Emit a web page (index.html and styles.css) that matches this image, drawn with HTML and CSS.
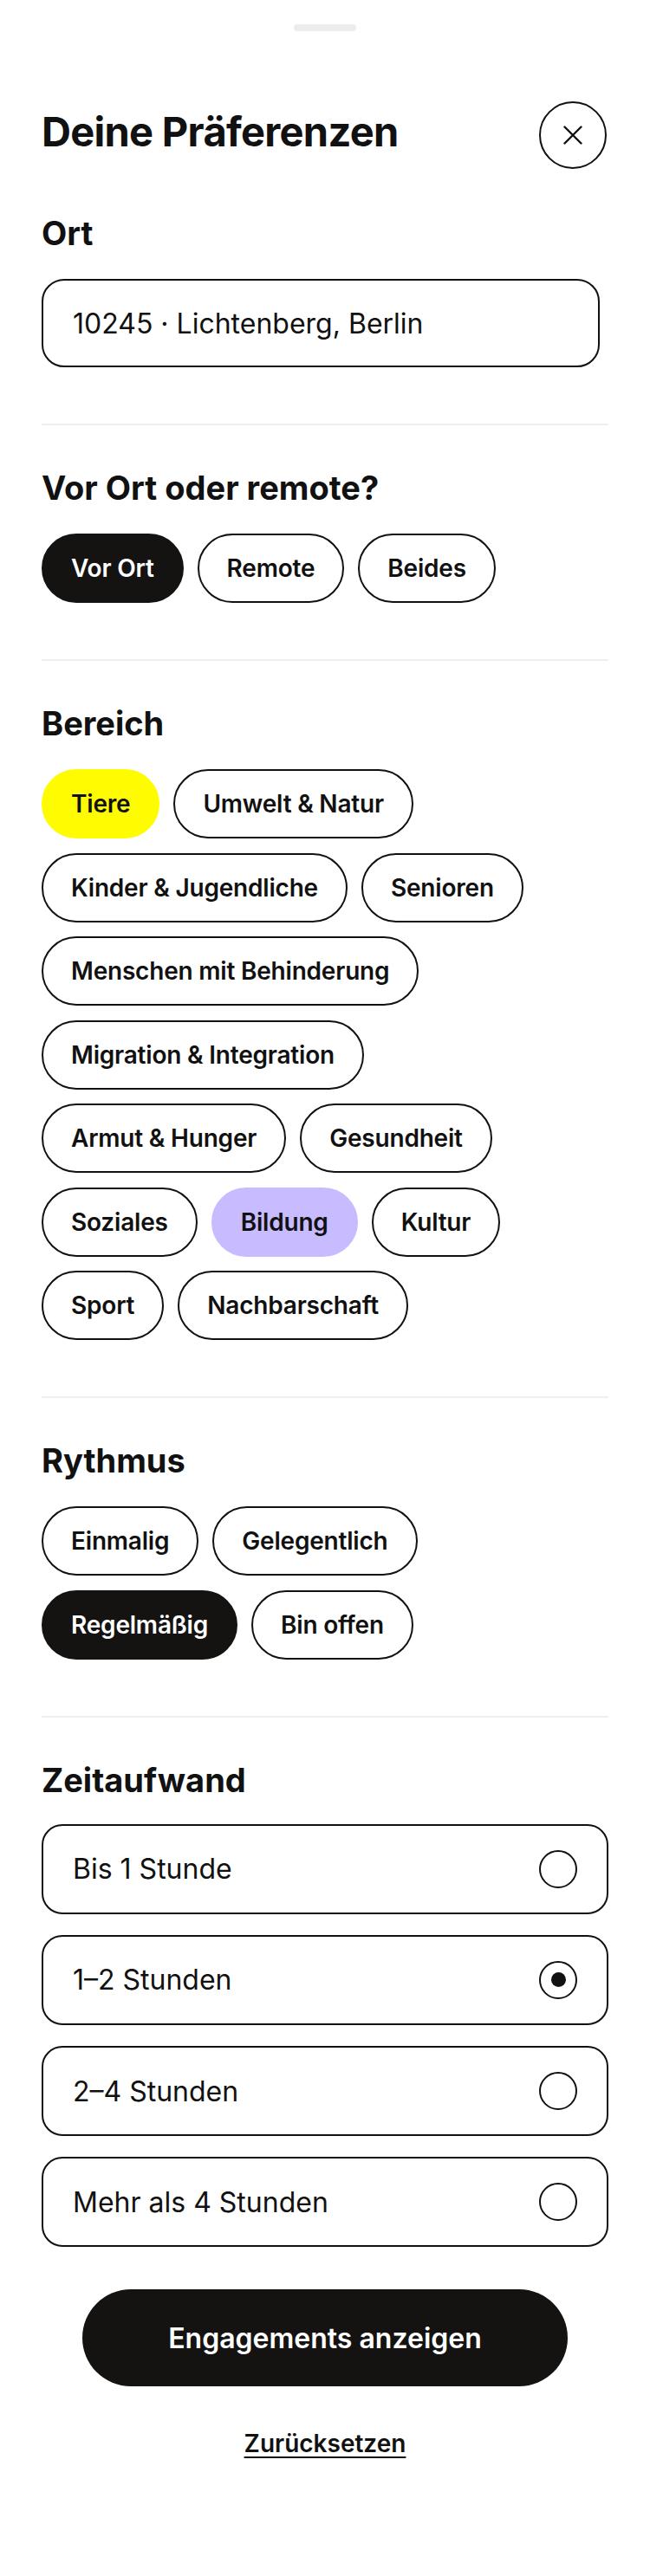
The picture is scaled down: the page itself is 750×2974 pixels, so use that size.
FILE: index.html
```html
<!DOCTYPE html>
<html lang="de">
<head>
    <meta charset="UTF-8">
    <meta name="viewport" content="width=device-width, initial-scale=1.0">
    <title>Deine Präferenzen</title>
    <link rel="stylesheet" href="styles.css">
</head>
<body>

    <div class="sheet">
        <div class="handle"></div>

        <header class="kopf">
            <h1>Deine Präferenzen</h1>
            <button class="schliessen" aria-label="Schließen">
                <svg width="22" height="22" viewBox="0 0 22 22">
                    <path d="M1.5 1.5 L20.5 20.5 M20.5 1.5 L1.5 20.5" stroke="#111" stroke-width="2.4" stroke-linecap="round" fill="none"/>
                </svg>
            </button>
        </header>

        <section class="gruppe erste">
            <h2>Ort</h2>
            <div class="feld">10245 · Lichtenberg, Berlin</div>
        </section>

        <section class="gruppe">
            <h2>Vor Ort oder remote?</h2>
            <div class="chips">
                <span class="chip aktiv">Vor Ort</span>
                <span class="chip">Remote</span>
                <span class="chip">Beides</span>
            </div>
        </section>

        <section class="gruppe">
            <h2>Bereich</h2>
            <div class="chips bereich">
                <span class="chip gelb">Tiere</span>
                <span class="chip">Umwelt &amp; Natur</span>
                <span class="chip">Kinder &amp; Jugendliche</span>
                <span class="chip">Senioren</span>
                <span class="chip">Menschen mit Behinderung</span>
                <span class="chip">Migration &amp; Integration</span>
                <span class="chip">Armut &amp; Hunger</span>
                <span class="chip">Gesundheit</span>
                <span class="chip">Soziales</span>
                <span class="chip lila">Bildung</span>
                <span class="chip">Kultur</span>
                <span class="chip">Sport</span>
                <span class="chip">Nachbarschaft</span>
            </div>
        </section>

        <section class="gruppe">
            <h2>Rythmus</h2>
            <div class="chips">
                <span class="chip">Einmalig</span>
                <span class="chip">Gelegentlich</span>
                <span class="chip aktiv">Regelmäßig</span>
                <span class="chip">Bin offen</span>
            </div>
        </section>

        <section class="gruppe letzte">
            <h2>Zeitaufwand</h2>
            <div class="optionen">
                <label class="option">Bis 1 Stunde <span class="radio"></span></label>
                <label class="option">1–2 Stunden <span class="radio an"></span></label>
                <label class="option">2–4 Stunden <span class="radio"></span></label>
                <label class="option">Mehr als 4 Stunden <span class="radio"></span></label>
            </div>
        </section>

        <button class="anzeigen">Engagements anzeigen</button>
        <a class="zuruck" href="#">Zurücksetzen</a>
    </div>

</body>
</html>
```

FILE: styles.css
```css
body {
    margin: 0;
    background: #fff;
    color: #111;
    font-family: Inter, "Noto Sans", sans-serif;
}
.sheet {
    padding: 28px 48px 0;
}
.handle {
    width: 72px;
    height: 8px;
    border-radius: 4px;
    background-color: #ececec;
    margin: 0 auto;
}
.kopf {
    display: flex;
    justify-content: space-between;
    align-items: center;
    margin-top: 81px;
    height: 78px;
}
h1 {
    font-size: 47px;
    line-height: 56px;
    font-weight: 700;
    letter-spacing: -0.015em;
    margin: 0 0 8px;
}
.schliessen {
    width: 78px;
    height: 78px;
    border: 2px solid #111;
    border-radius: 50%;
    background: #fff;
    display: flex;
    align-items: center;
    justify-content: center;
    padding: 0;
    margin-right: 2px;
}
.gruppe {
    padding: 49px 0 65px;
    border-top: 2px solid #efefef;
}
.gruppe.erste {
    padding-top: 51px;
    border-top: none;
}
.gruppe.letzte {
    padding-bottom: 49px;
}
h2 {
    font-size: 38px;
    line-height: 46px;
    font-weight: 700;
    margin: 0 0 30px;
}
.letzte h2 {
    margin-bottom: 28px;
}
.feld {
    width: 644px;
    height: 102px;
    box-sizing: border-box;
    border: 2px solid #111;
    border-radius: 26px;
    padding: 0 34px;
    display: flex;
    align-items: center;
    font-size: 32px;
}
.chips {
    display: flex;
    flex-wrap: wrap;
    gap: 16.5px 16px;
}
.chips.bereich {
    margin-top: 6px;
}
.chip {
    height: 80px;
    box-sizing: border-box;
    border: 2px solid #111;
    border-radius: 40px;
    padding: 0 32px;
    display: flex;
    align-items: center;
    font-size: 28px;
    font-weight: 600;
    letter-spacing: -0.2px;
    background: #fff;
}
.chip.aktiv { background-color: #141311; border-color: #141311; color: #fff; }
.chip.gelb { background-color: #fffb00; border-color: #fffb00; }
.chip.lila { background-color: #c8bbff; border-color: #c8bbff; }
.optionen {
    display: flex;
    flex-direction: column;
    gap: 24.3px;
}
.option {
    height: 104px;
    box-sizing: border-box;
    border: 2px solid #111;
    border-radius: 24px;
    padding: 0 34px;
    display: flex;
    align-items: center;
    justify-content: space-between;
    font-size: 32px;
}
.radio {
    width: 44px;
    height: 44px;
    box-sizing: border-box;
    border: 2px solid #111;
    border-radius: 50%;
    display: flex;
    align-items: center;
    justify-content: center;
}
.radio.an::after {
    content: "";
    width: 17px;
    height: 17px;
    border-radius: 50%;
    background-color: #111;
}
.anzeigen {
    display: block;
    width: 560px;
    height: 112px;
    margin: 0 auto;
    border: none;
    border-radius: 56px;
    background-color: #141311;
    color: #fff;
    font-family: inherit;
    font-size: 32px;
    font-weight: 600;
}
.zuruck {
    display: table;
    margin: 49px auto 0;
    font-size: 28px;
    line-height: 34px;
    font-weight: 600;
    color: #111;
    text-decoration: underline;
    text-decoration-thickness: 2px;
    text-underline-offset: 5px;
}
```
